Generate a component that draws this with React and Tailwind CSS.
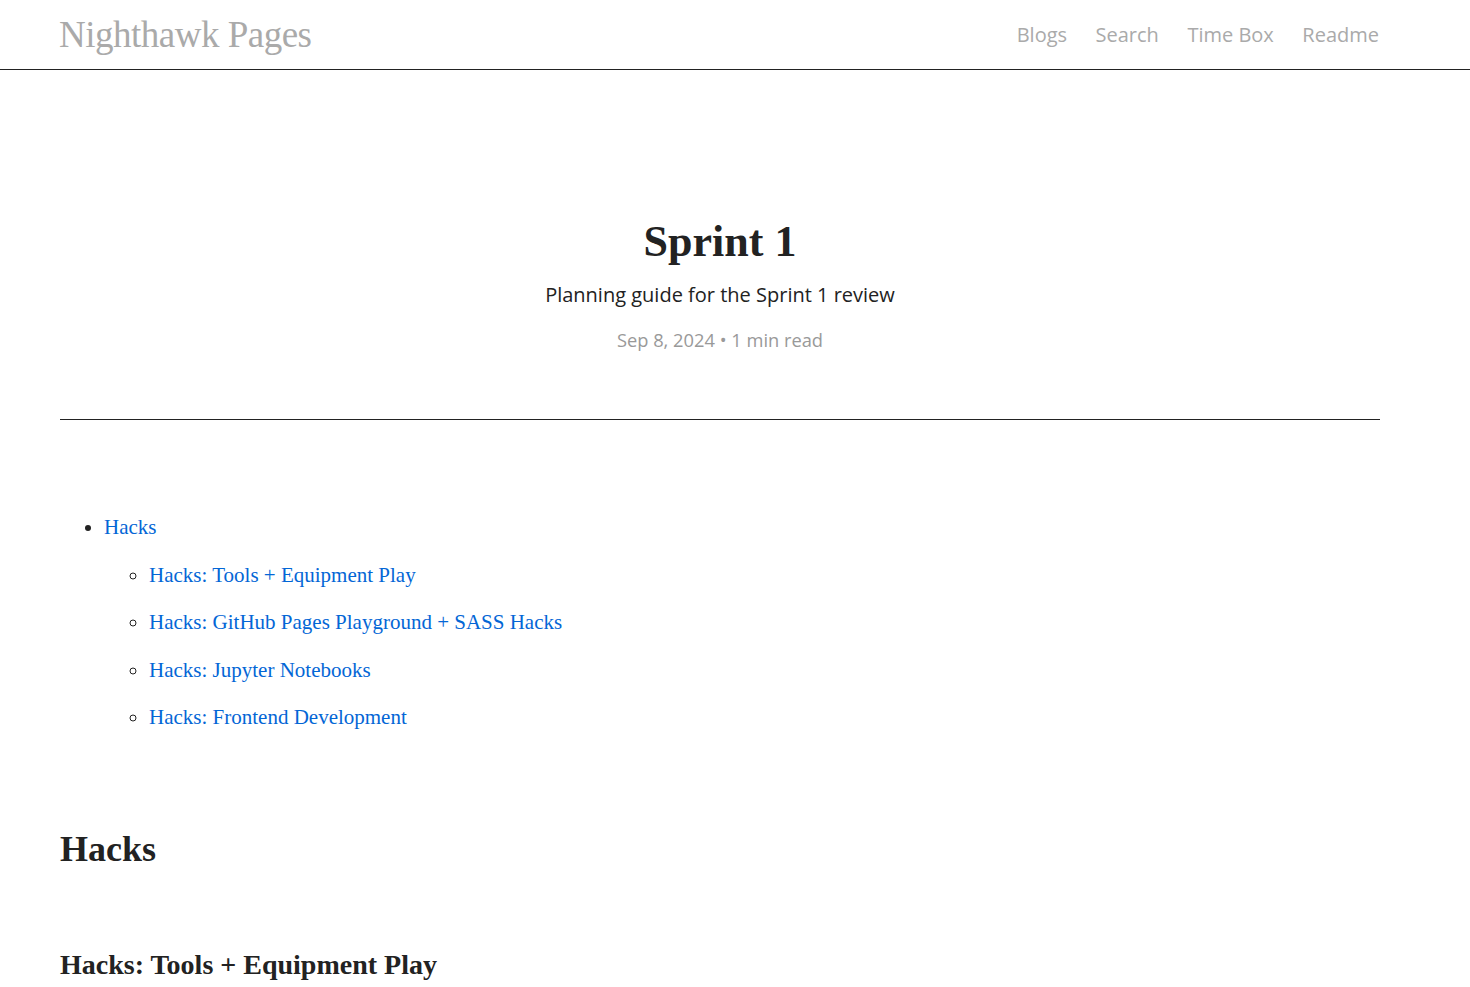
export default function App() {
  const serif = { fontFamily: '"Liberation Serif", "Times New Roman", serif' };
  const sans = { fontFamily: '"Open Sans", "Noto Sans", sans-serif' };
  const subs = [
    "Hacks: Tools + Equipment Play",
    "Hacks: GitHub Pages Playground + SASS Hacks",
    "Hacks: Jupyter Notebooks",
    "Hacks: Frontend Development",
  ];
  return (
    <div className="min-h-screen bg-white text-[#222]" style={serif}>
      <header className="h-[70px] border-b border-[#222]">
        <div className="ml-[60px] w-[1320px] h-full flex items-center justify-between">
          <a className="text-[37px] leading-none text-[#aaa] tracking-[-0.5px] -ml-[1px]" style={serif}>Nighthawk Pages</a>
          <nav className="flex gap-[28.5px] text-[20px] text-[#aaa] pr-[1px]" style={sans}>
            <a>Blogs</a>
            <a>Search</a>
            <a>Time Box</a>
            <a>Readme</a>
          </nav>
        </div>
      </header>
      <main className="ml-[60px] w-[1320px]">
        <div className="pt-[150px] pb-[66px] flex flex-col items-center border-b border-[#222]">
          <h1 className="text-[44px] font-bold leading-none text-[#222]" style={serif}>Sprint 1</h1>
          <p className="mt-[16px] text-[20px] text-[#222]" style={sans}>Planning guide for the Sprint 1 review</p>
          <p className="mt-[16px] text-[18.3px] text-[#999]" style={sans}>Sep 8, 2024 • 1 min read</p>
        </div>
        <ul className="mt-[93px] pl-[44px] list-disc text-[21px]">
          <li className="leading-[28px]">
            <a className="text-[#0366d6]">Hacks</a>
            <ul className="list-[circle] pl-[45px] mt-[19.5px] flex flex-col gap-[19.5px]">
              {subs.map((s) => (
                <li key={s} className="leading-[28px]">
                  <a className="text-[#0366d6]">{s}</a>
                </li>
              ))}
            </ul>
          </li>
        </ul>
        <h2 className="mt-[100px] text-[36px] font-bold leading-none">Hacks</h2>
        <h3 className="mt-[84px] text-[28px] font-bold leading-none">Hacks: Tools + Equipment Play</h3>
      </main>
    </div>
  );
}
